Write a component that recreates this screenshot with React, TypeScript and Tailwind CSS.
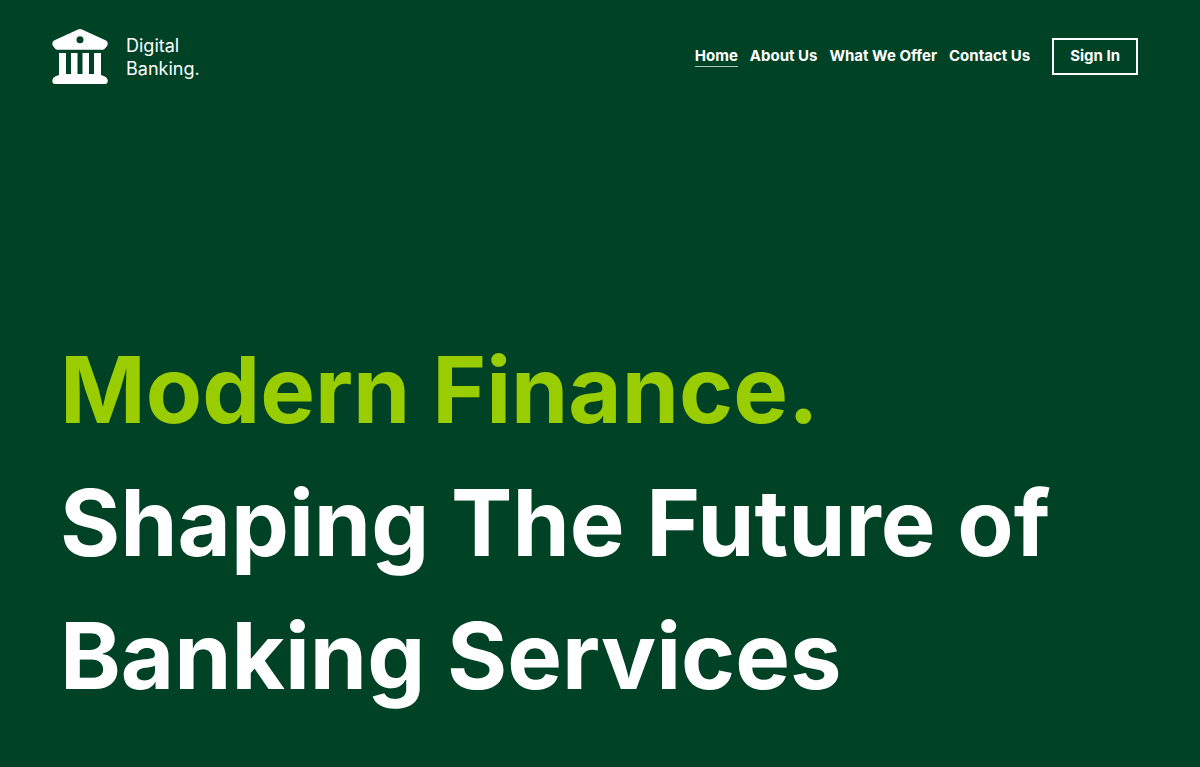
const links = ["Home", "About Us", "What We Offer", "Contact Us"];

function BankLogo() {
  return (
    <svg className="h-14 w-14 shrink-0" viewBox="0 0 56 56" fill="#fff" aria-hidden="true">
      <path
        fillRule="evenodd"
        d="M26 1.600Q28 .6 30 1.600L53.500 12.200Q55.800 13.300 55.800 15.500Q55.800 17.500 54.500 18.800L52.500 21Q51.800 21.800 50.500 21.800H5.500Q4.200 21.800 3.500 21L1.500 18.800Q.3 17.500 .3 15.500Q.3 13.300 2.500 12.200ZM28 8.200A3.500 3.500 0 1 0 28 15.200A3.500 3.500 0 1 0 28 8.200Z"
      />
      <path d="M7 25H14V47H7ZM19 25H25.500V47H19ZM30.500 25H37V47H30.500ZM42 25H49V47H42Z" />
      <path d="M7 46H49V47Q53 48 54.500 49.800Q55.800 51.200 55.800 53Q55.600 56 53 56H3Q.4 56 .3 53Q.3 51.200 1.500 49.800Q3 48 7 47Z" />
    </svg>
  );
}

export default function App() {
  return (
    <div className="min-h-screen bg-[#004225] font-['Inter',sans-serif] text-white">
      <header className="flex items-center justify-between pt-7 pr-[62px] pl-[52px]">
        <a href="#" className="flex items-center gap-[18px] text-lg leading-[23px]">
          <BankLogo />
          <span className="pt-0.5">
            Digital
            <br />
            Banking.
          </span>
        </a>
        <nav className="flex items-center text-[15px] font-bold">
          <ul className="flex items-center gap-3">
            {links.map((label, i) => (
              <li key={label}>
                <a href="#" className={i === 0 ? "block border-b border-white/70 leading-5" : "block border-b border-transparent leading-5"}>
                  {label}
                </a>
              </li>
            ))}
          </ul>
          <button type="button" className="ml-[22px] h-[37px] border-2 border-white px-4">
            Sign In
          </button>
        </nav>
      </header>
      <main className="px-[60px] pt-[239px]">
        <h1 className="text-[92px] leading-[133px] font-bold">
          <span className="block text-[#9acd00]">Modern Finance.</span>
          <span className="block">
            Shaping The Future of
            <br />
            Banking Services
          </span>
        </h1>
      </main>
    </div>
  );
}
